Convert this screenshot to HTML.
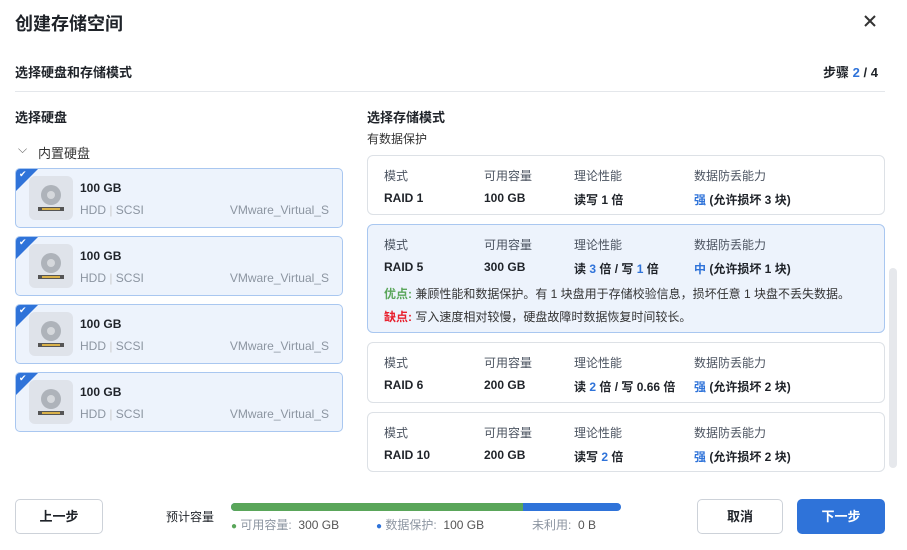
<!DOCTYPE html>
<html><head><meta charset="utf-8"><style>
*{box-sizing:border-box;margin:0;padding:0}
body{width:907px;height:550px;background:#fff;font-family:"Liberation Sans","Noto Sans CJK SC",sans-serif;color:#1f2329;position:relative;overflow:hidden;font-size:12px}
.a{position:absolute;white-space:nowrap}
.disk{position:absolute;left:15px;width:328px;height:60px;border:1px solid #a9c7f0;background:#edf3fc;border-radius:5px;overflow:hidden}
.disk .tri{position:absolute;left:0;top:0;width:0;height:0;border-top:22px solid #2f73d9;border-right:22px solid transparent}
.disk .ck{position:absolute;left:3px;top:0px;color:#fff;font-size:9px}
.disk .ic{position:absolute;left:13px;top:7px;width:44px;height:44px;background:#dfe3ea;border-radius:6px}
.disk .t{position:absolute;left:64px;top:12px;font-size:12px;font-weight:bold}
.disk .s{position:absolute;left:64px;top:34px;color:#8c95a1;font-size:12px}
.disk .v{position:absolute;right:13px;top:34px;color:#8c95a1;font-size:12px}
.card{position:absolute;left:367px;width:518px;border:1px solid #dde1e6;border-radius:6px;background:#fff}
.card.sel{border-color:#a9c7f0;background:#edf3fc}
.card .l{position:absolute;top:11px;color:#4b5360;font-size:12px}
.card .val{position:absolute;top:35px;font-size:12px;font-weight:bold}
.b{color:#2f73d9}
.btn{position:absolute;top:499px;height:35px;border:1px solid #cdd2d9;border-radius:5px;text-align:center;line-height:33px;font-size:13px;font-weight:bold;background:#fff}
</style></head><body>
<div class="a" style="left:15px;top:10px;font-size:18px;font-weight:bold">创建存储空间</div>
<svg class="a" style="left:864px;top:15px" width="12" height="12"><path d="M1 1L11 11M11 1L1 11" stroke="#333" stroke-width="2"/></svg>
<div class="a" style="left:15px;top:62px;font-size:13px;font-weight:bold">选择硬盘和存储模式</div>
<div class="a" style="left:823px;top:62px;font-size:13px;font-weight:bold">步骤 <span class="b">2</span> / 4</div>
<div class="a" style="left:15px;top:91px;width:870px;height:1px;background:#e4e7eb"></div>
<div class="a" style="left:15px;top:107px;font-size:13px;font-weight:bold">选择硬盘</div>
<div class="a" style="left:18px;top:142px;font-size:12px;color:#666">⌵</div>
<div class="a" style="left:38px;top:143px;font-size:13px;color:#333">内置硬盘</div>
<div class="disk" style="top:168px"><div class="tri"></div><div class="ck">✔</div><div class="ic"><svg width="44" height="44"><circle cx="22" cy="19" r="10" fill="#aeb3ba"/><circle cx="22" cy="19" r="4" fill="#d5d8dc"/><rect x="9" y="31" width="26" height="4" fill="#555"/><rect x="13" y="32" width="18" height="2" fill="#d9b14a"/></svg></div><div class="t">100 GB</div><div class="s">HDD <span style="color:#ccc">|</span> SCSI</div><div class="v">VMware_Virtual_S</div></div>
<div class="disk" style="top:236px"><div class="tri"></div><div class="ck">✔</div><div class="ic"><svg width="44" height="44"><circle cx="22" cy="19" r="10" fill="#aeb3ba"/><circle cx="22" cy="19" r="4" fill="#d5d8dc"/><rect x="9" y="31" width="26" height="4" fill="#555"/><rect x="13" y="32" width="18" height="2" fill="#d9b14a"/></svg></div><div class="t">100 GB</div><div class="s">HDD <span style="color:#ccc">|</span> SCSI</div><div class="v">VMware_Virtual_S</div></div>
<div class="disk" style="top:304px"><div class="tri"></div><div class="ck">✔</div><div class="ic"><svg width="44" height="44"><circle cx="22" cy="19" r="10" fill="#aeb3ba"/><circle cx="22" cy="19" r="4" fill="#d5d8dc"/><rect x="9" y="31" width="26" height="4" fill="#555"/><rect x="13" y="32" width="18" height="2" fill="#d9b14a"/></svg></div><div class="t">100 GB</div><div class="s">HDD <span style="color:#ccc">|</span> SCSI</div><div class="v">VMware_Virtual_S</div></div>
<div class="disk" style="top:372px"><div class="tri"></div><div class="ck">✔</div><div class="ic"><svg width="44" height="44"><circle cx="22" cy="19" r="10" fill="#aeb3ba"/><circle cx="22" cy="19" r="4" fill="#d5d8dc"/><rect x="9" y="31" width="26" height="4" fill="#555"/><rect x="13" y="32" width="18" height="2" fill="#d9b14a"/></svg></div><div class="t">100 GB</div><div class="s">HDD <span style="color:#ccc">|</span> SCSI</div><div class="v">VMware_Virtual_S</div></div>

<div class="a" style="left:367px;top:107px;font-size:13px;font-weight:bold">选择存储模式</div>
<div class="a" style="left:367px;top:130px;font-size:12px;color:#333">有数据保护</div>

<div class="card" style="top:155px;height:60px"><div class="l" style="left:16px">模式</div><div class="l" style="left:116px">可用容量</div><div class="l" style="left:206px">理论性能</div><div class="l" style="left:326px">数据防丢能力</div>
<div class="val" style="left:16px">RAID 1</div><div class="val" style="left:116px">100 GB</div><div class="val" style="left:206px">读写 1 倍</div><div class="val" style="left:326px"><span class="b">强</span> (允许损坏 3 块)</div></div>

<div class="card sel" style="top:224px;height:109px"><div class="l" style="left:16px">模式</div><div class="l" style="left:116px">可用容量</div><div class="l" style="left:206px">理论性能</div><div class="l" style="left:326px">数据防丢能力</div>
<div class="val" style="left:16px">RAID 5</div><div class="val" style="left:116px">300 GB</div><div class="val" style="left:206px">读 <span class="b">3</span> 倍 / 写 <span class="b">1</span> 倍</div><div class="val" style="left:326px"><span class="b">中</span> (允许损坏 1 块)</div>
<div class="a" style="left:16px;top:60px;font-size:12px;color:#333"><b style="color:#5aa65a">优点:</b> 兼顾性能和数据保护。有 1 块盘用于存储校验信息，损坏任意 1 块盘不丢失数据。</div>
<div class="a" style="left:16px;top:83px;font-size:12px;color:#333"><b style="color:#e8202e">缺点:</b> 写入速度相对较慢，硬盘故障时数据恢复时间较长。</div></div>

<div class="card" style="top:342px;height:61px"><div class="l" style="left:16px">模式</div><div class="l" style="left:116px">可用容量</div><div class="l" style="left:206px">理论性能</div><div class="l" style="left:326px">数据防丢能力</div>
<div class="val" style="left:16px">RAID 6</div><div class="val" style="left:116px">200 GB</div><div class="val" style="left:206px">读 <span class="b">2</span> 倍 / 写 0.66 倍</div><div class="val" style="left:326px"><span class="b">强</span> (允许损坏 2 块)</div></div>

<div class="card" style="top:412px;height:60px"><div class="l" style="left:16px">模式</div><div class="l" style="left:116px">可用容量</div><div class="l" style="left:206px">理论性能</div><div class="l" style="left:326px">数据防丢能力</div>
<div class="val" style="left:16px">RAID 10</div><div class="val" style="left:116px">200 GB</div><div class="val" style="left:206px">读写 <span class="b">2</span> 倍</div><div class="val" style="left:326px"><span class="b">强</span> (允许损坏 2 块)</div></div>

<div class="a" style="left:889px;top:268px;width:8px;height:200px;background:#e6e8ec;border-radius:4px"></div>

<div class="btn" style="left:15px;width:88px">上一步</div>
<div class="a" style="left:166px;top:508px;font-size:12px">预计容量</div>
<div class="a" style="left:231px;top:503px;width:390px;height:8px;border-radius:4px;background:#2f73d9;overflow:hidden"><div style="width:292px;height:8px;background:#5aa65a"></div></div>
<div class="a" style="left:231px;top:516px;font-size:12px;color:#8c95a1"><span style="color:#5aa65a;font-size:10px">●</span> 可用容量:&nbsp;&nbsp;<span style="color:#555">300 GB</span></div>
<div class="a" style="left:376px;top:516px;font-size:12px;color:#8c95a1"><span style="color:#2f73d9;font-size:10px">●</span> 数据保护:&nbsp;&nbsp;<span style="color:#555">100 GB</span></div>
<div class="a" style="left:532px;top:516px;font-size:12px;color:#8c95a1">未利用:&nbsp;&nbsp;<span style="color:#555">0 B</span></div>
<div class="btn" style="left:697px;width:86px">取消</div>
<div class="btn" style="left:797px;width:88px;background:#2f73d9;border-color:#2f73d9;color:#fff">下一步</div>
</body></html>
